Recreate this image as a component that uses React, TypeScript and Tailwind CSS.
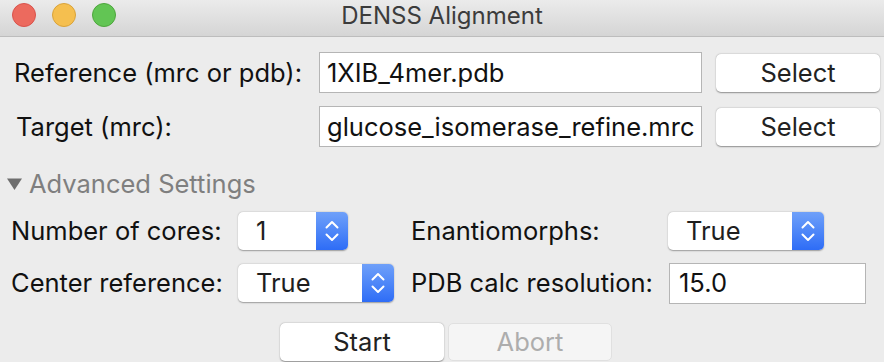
import React from "react";

function Stepper() {
  return (
    <div className="flex h-full w-[32px] items-center justify-center rounded-r-[5px] bg-gradient-to-b from-[#6fa0f9] to-[#2e6cf6]">
      <svg width="18" height="28" viewBox="0 0 18 28" fill="none">
        <path d="M3.5 10.5 L9 5 L14.5 10.5" stroke="white" strokeWidth="2" strokeLinecap="round" strokeLinejoin="round" />
        <path d="M3.5 17.5 L9 23 L14.5 17.5" stroke="white" strokeWidth="2" strokeLinecap="round" strokeLinejoin="round" />
      </svg>
    </div>
  );
}

function PopUp({ value, width }: { value: string; width: string }) {
  return (
    <div className={`flex h-[38px] ${width} items-center rounded-[5px] bg-white shadow-[0_0.5px_1.5px_rgba(0,0,0,0.35)]`}>
      <span className="flex-1 pl-[18px] text-[#1e1e1e]">{value}</span>
      <Stepper />
    </div>
  );
}

function PushButton({ label, disabled }: { label: string; disabled?: boolean }) {
  return (
    <button
      className={
        disabled
          ? "h-[38px] w-[164px] rounded-[5px] border border-[#e0e0e0] bg-[#f5f5f5] text-[#adadad]"
          : "h-[38px] w-[164px] rounded-[5px] bg-white text-[#222] shadow-[0_0.5px_1.5px_rgba(0,0,0,0.4)]"
      }
    >
      {label}
    </button>
  );
}

export default function App() {
  return (
    <div
      className="flex h-[362px] w-[884px] flex-col overflow-hidden bg-[#ececec] text-[25.5px] leading-none text-[#111]"
      style={{ fontFamily: "Inter, 'Liberation Sans', sans-serif" }}
    >
      {/* title bar */}
      <div className="relative flex h-[37px] shrink-0 items-center justify-center border-b border-[#bdbdbd] bg-gradient-to-b from-[#ebebeb] to-[#d5d5d5]">
        <div className="absolute left-[12px] top-[3px] flex gap-[16px]">
          <div className="h-[24px] w-[24px] rounded-full border border-[#d9534c] bg-[#ec6a5e]" />
          <div className="h-[24px] w-[24px] rounded-full border border-[#d9a33a] bg-[#f5bf4f]" />
          <div className="h-[24px] w-[24px] rounded-full border border-[#4ea63d] bg-[#62c554]" />
        </div>
        <span className="-mt-[4px] text-[24px] text-[#3c3c3c]">DENSS Alignment</span>
      </div>

      {/* file rows */}
      <div className="mt-[15px] flex flex-col gap-[13px]">
        <div className="flex h-[41px] items-center">
          <span className="w-[319px] pl-[14px]">Reference (mrc or pdb):</span>
          <div className="flex h-[41px] w-[383px] items-center border border-[#b5b5b5] bg-white pl-[7px]">1XIB_4mer.pdb</div>
          <div className="ml-[14px]">
            <PushButton label="Select" />
          </div>
        </div>
        <div className="flex h-[41px] items-center">
          <span className="w-[319px] pl-[16px]">Target (mrc):</span>
          <div className="flex h-[41px] w-[383px] items-center border border-[#b5b5b5] bg-white pl-[7px]">glucose_isomerase_refine.mrc</div>
          <div className="ml-[14px]">
            <PushButton label="Select" />
          </div>
        </div>
      </div>

      {/* advanced */}
      <div className="mt-[24px] flex items-center gap-[6px] pl-[6px] text-[#7f7f7f]">
        <svg width="17" height="14" viewBox="0 0 17 14">
          <path d="M1 1.5 H16 L8.5 13 Z" fill="#6e6e6e" />
        </svg>
        <span>Advanced Settings</span>
      </div>

      <div className="mt-[15px] flex flex-col gap-[13px]">
        <div className="flex h-[38px] items-center">
          <span className="w-[238px] pl-[11px]">Number of cores:</span>
          <PopUp value="1" width="w-[110px]" />
          <span className="ml-[63px] w-[257px]">Enantiomorphs:</span>
          <PopUp value="True" width="w-[156px]" />
        </div>
        <div className="flex h-[41px] items-center">
          <span className="w-[238px] pl-[11px]">Center reference:</span>
          <PopUp value="True" width="w-[156px]" />
          <span className="ml-[17px] w-[258px]">PDB calc resolution:</span>
          <div className="flex h-[41px] w-[197px] items-center border border-[#b5b5b5] bg-white pl-[9px]">15.0</div>
        </div>
      </div>

      <div className="mt-[19px] flex gap-[4px] pl-[280px]">
        <PushButton label="Start" />
        <PushButton label="Abort" disabled />
      </div>
    </div>
  );
}
